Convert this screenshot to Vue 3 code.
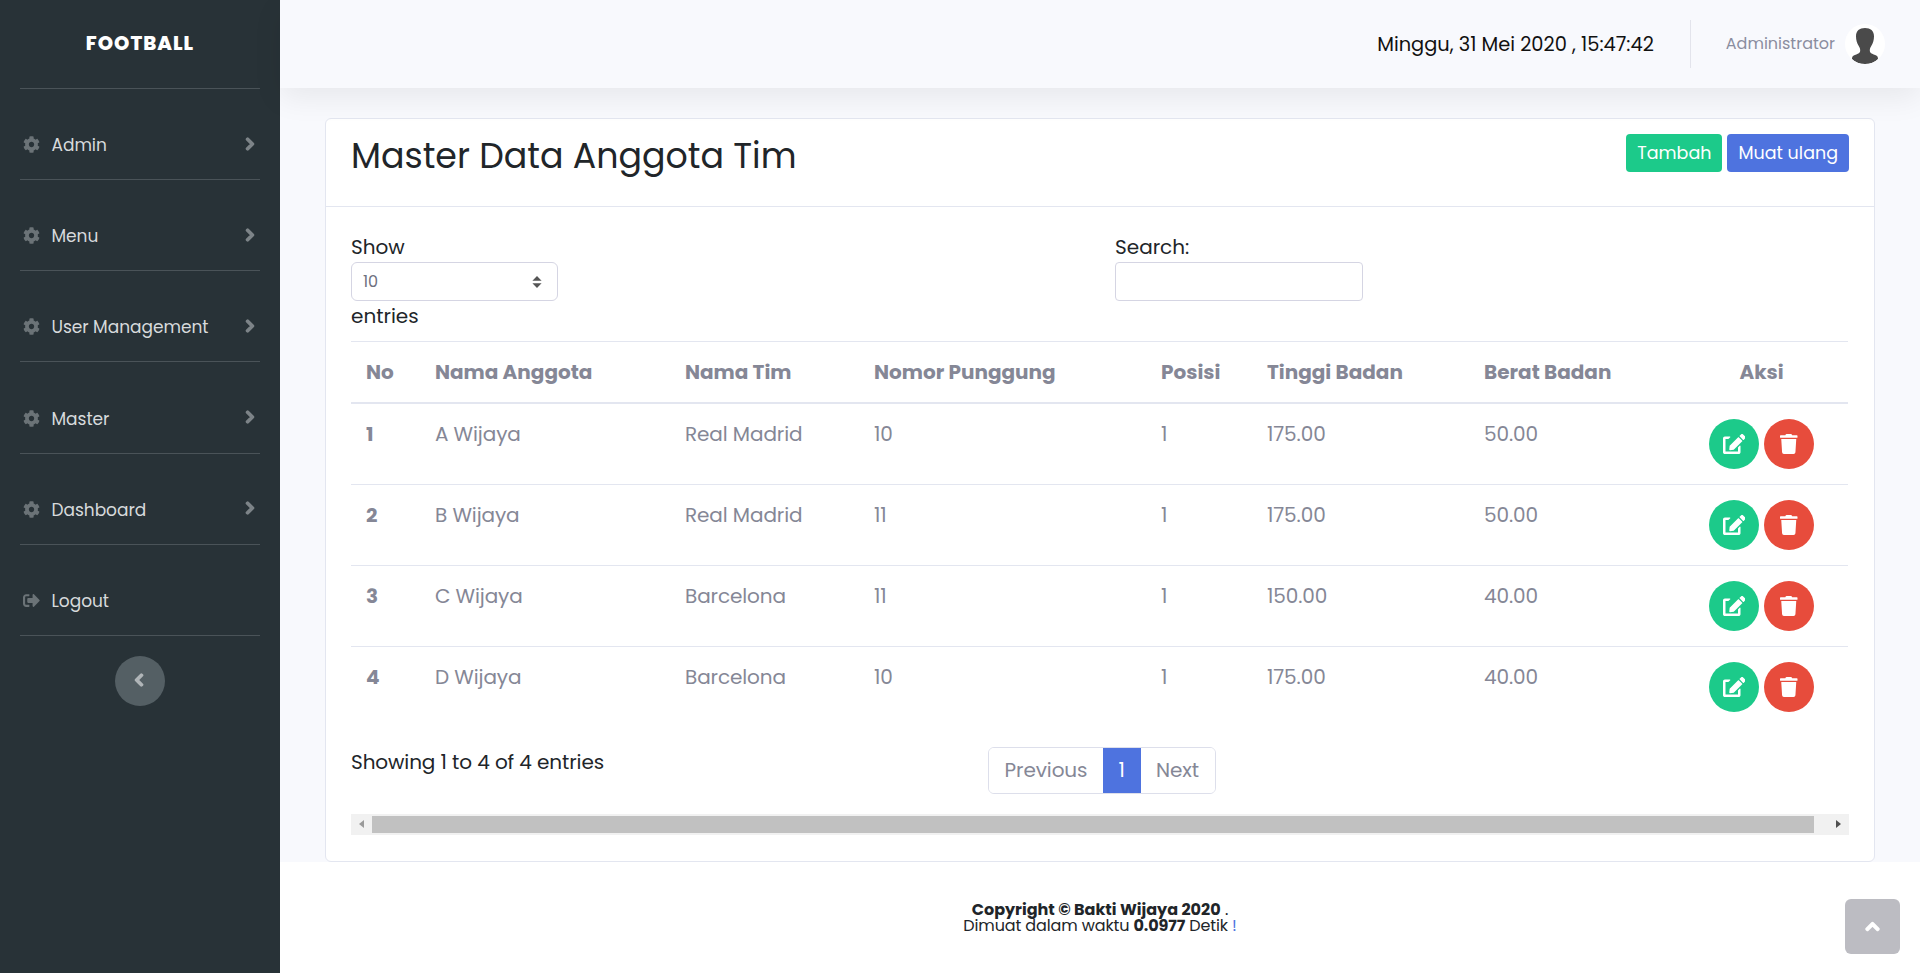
<script setup>
const menu = ['Admin', 'Menu', 'User Management', 'Master', 'Dashboard']
const rows = [
  { no: 1, nama: 'A Wijaya', tim: 'Real Madrid', nomor: 10, posisi: 1, tinggi: '175.00', berat: '50.00' },
  { no: 2, nama: 'B Wijaya', tim: 'Real Madrid', nomor: 11, posisi: 1, tinggi: '175.00', berat: '50.00' },
  { no: 3, nama: 'C Wijaya', tim: 'Barcelona', nomor: 11, posisi: 1, tinggi: '150.00', berat: '40.00' },
  { no: 4, nama: 'D Wijaya', tim: 'Barcelona', nomor: 10, posisi: 1, tinggi: '175.00', berat: '40.00' },
]
const cog = 'M487.4 315.7l-42.6-24.6c4.3-23.2 4.3-47 0-70.2l42.6-24.6c4.9-2.8 7.1-8.6 5.5-14-11.1-35.6-30-67.8-54.7-94.6-3.8-4.1-10-5.1-14.8-2.3L380.8 110c-17.9-15.4-38.5-27.3-60.8-35.1V25.8c0-5.6-3.9-10.5-9.4-11.7-36.7-8.2-74.3-7.8-109.2 0-5.5 1.2-9.4 6.1-9.4 11.7V75c-22.2 7.9-42.8 19.8-60.8 35.1L88.7 85.5c-4.9-2.8-11-1.9-14.8 2.3-24.7 26.7-43.6 58.9-54.7 94.6-1.7 5.4.6 11.2 5.5 14L67.3 221c-4.3 23.2-4.3 47 0 70.2l-42.6 24.6c-4.9 2.8-7.1 8.6-5.5 14 11.1 35.6 30 67.8 54.7 94.6 3.8 4.1 10 5.1 14.8 2.3l42.6-24.6c17.9 15.4 38.5 27.3 60.8 35.1v49.2c0 5.6 3.9 10.5 9.4 11.7 36.7 8.2 74.3 7.8 109.2 0 5.5-1.2 9.4-6.1 9.4-11.7v-49.2c22.2-7.9 42.8-19.8 60.8-35.1l42.6 24.6c4.9 2.8 11 1.9 14.8-2.3 24.7-26.7 43.6-58.9 54.7-94.6 1.5-5.5-.7-11.3-5.6-14.1zM256 336c-44.1 0-80-35.9-80-80s35.9-80 80-80 80 35.9 80 80-35.9 80-80 80z'
const chevRight = 'M285.476 272.971L91.132 467.314c-9.373 9.373-24.569 9.373-33.941 0l-22.667-22.667c-9.357-9.357-9.375-24.522-.04-33.901L188.505 256 34.484 101.255c-9.335-9.379-9.317-24.544.04-33.901l22.667-22.667c9.373-9.373 24.569-9.373 33.941 0L285.475 239.03c9.373 9.372 9.373 24.568.001 33.941z'
</script>

<template>
  <div class="app">
    <aside class="sidebar">
      <div class="brand">FOOTBALL</div>
      <a v-for="m in menu" :key="m" class="item">
        <svg class="ic" viewBox="0 0 512 512"><path :d="cog" /></svg>
        <span class="label">{{ m }}</span>
        <svg class="chev" viewBox="0 0 320 512"><path :d="chevRight" /></svg>
      </a>
      <a class="item">
        <svg class="ic" viewBox="0 0 512 512"><path d="M497 273L329 441c-15 15-41 4.5-41-17v-96H152c-13.3 0-24-10.7-24-24v-96c0-13.3 10.7-24 24-24h136V88c0-21.4 25.9-32 41-17l168 168c9.3 9.4 9.3 24.6 0 34zM192 436v-40c0-6.6-5.4-12-12-12H96c-17.7 0-32-14.3-32-32V160c0-17.7 14.3-32 32-32h84c6.6 0 12-5.4 12-12V76c0-6.6-5.4-12-12-12H96c-53 0-96 43-96 96v192c0 53 43 96 96 96h84c6.6 0 12-5.4 12-12z" /></svg>
        <span class="label">Logout</span>
      </a>
      <div class="collapse">
        <svg viewBox="0 0 320 512"><path d="M34.52 239.03L228.87 44.69c9.37-9.37 24.57-9.37 33.94 0l22.67 22.67c9.36 9.36 9.37 24.52.04 33.9L131.49 256l154.02 154.75c9.34 9.38 9.32 24.54-.04 33.9l-22.67 22.67c-9.37 9.37-24.57 9.37-33.94 0L34.52 272.97c-9.37-9.37-9.37-24.57 0-33.94z" /></svg>
      </div>
    </aside>

    <div class="main">
      <header class="topbar">
        <div class="clock">Minggu, 31 Mei 2020 , 15:47:42</div>
        <div class="sep"></div>
        <div class="who">Administrator</div>
        <div class="avatar">
          <svg viewBox="0 0 40 40"><path d="M20 4c-5.600 0-9 2.800-9 8.200 0 3.600 1 7 2.600 9.600 1 1.600 1.600 3 1.600 4.700 0 1.600-.8 2.500-2.400 3.200-2 .9-4 1.600-5 2.500-.6.6-.8 1.700-.8 2.800 2.800 3 7.400 5 13 5s10.200-2 13-5c0-1.100-.2-2.200-.8-2.800-1-.9-3-1.600-5-2.500-1.600-.7-2.400-1.600-2.400-3.200 0-1.700.6-3.100 1.600-4.700C28 19.200 29 15.800 29 12.200 29 6.800 25.600 4 20 4z" /></svg>
        </div>
      </header>

      <main class="content">
        <section class="card">
          <div class="card-head">
            <h1>Master Data Anggota Tim</h1>
            <div class="actions">
              <button class="btn green">Tambah</button>
              <button class="btn blue">Muat ulang</button>
            </div>
          </div>
          <div class="card-body">
            <div class="tools">
              <div class="len">
                <div>Show</div>
                <div class="select">
                  <span>10</span>
                  <svg viewBox="0 0 10 12"><path d="M5 0l4.600 4.800H.4zM5 12L.4 7.200h9.200z" /></svg>
                </div>
                <div>entries</div>
              </div>
              <div class="search">
                <div>Search:</div>
                <input type="search" aria-label="Search" />
              </div>
            </div>

            <table>
              <colgroup>
                <col class="c1" /><col class="c2" /><col class="c3" /><col class="c4" />
                <col class="c5" /><col class="c6" /><col class="c7" /><col class="c8" />
              </colgroup>
              <thead>
                <tr>
                  <th>No</th><th>Nama Anggota</th><th>Nama Tim</th><th>Nomor Punggung</th>
                  <th>Posisi</th><th>Tinggi Badan</th><th>Berat Badan</th><th class="mid">Aksi</th>
                </tr>
              </thead>
              <tbody>
                <tr v-for="r in rows" :key="r.no">
                  <td class="strong">{{ r.no }}</td>
                  <td>{{ r.nama }}</td>
                  <td>{{ r.tim }}</td>
                  <td>{{ r.nomor }}</td>
                  <td>{{ r.posisi }}</td>
                  <td>{{ r.tinggi }}</td>
                  <td>{{ r.berat }}</td>
                  <td class="mid ops">
                    <span class="round green">
                      <svg viewBox="0 0 576 512"><path d="M402.600 83.200l90.200 90.200c3.800 3.800 3.800 10 0 13.800L274.400 405.600l-92.800 10.300c-12.400 1.400-22.900-9.100-21.500-21.500l10.300-92.800L388.800 83.200c3.800-3.800 10-3.800 13.800 0zm162-22.900l-48.800-48.800c-15.200-15.200-39.900-15.200-55.200 0l-35.400 35.400c-3.800 3.800-3.800 10 0 13.800l90.200 90.200c3.800 3.800 10 3.800 13.800 0l35.400-35.400c15.200-15.300 15.200-40 0-55.200zM384 346.200V448H64V128h73.100c3.200 0 6.200-1.300 8.500-3.500l40-40c7.600-7.600 2.200-20.500-8.500-20.500H48C21.500 64 0 85.500 0 112v352c0 26.500 21.500 48 48 48h352c26.500 0 48-21.500 48-48V306.200c0-10.700-12.900-16-20.500-8.500l-40 40c-2.200 2.300-3.500 5.300-3.500 8.500z" /></svg>
                    </span>
                    <span class="round red">
                      <svg viewBox="0 0 448 512"><path d="M432 32H312l-9.400-18.700A24 24 0 0 0 281.100 0H166.800a23.720 23.720 0 0 0-21.400 13.300L136 32H16A16 16 0 0 0 0 48v32a16 16 0 0 0 16 16h416a16 16 0 0 0 16-16V48a16 16 0 0 0-16-16zM53.200 467a48 48 0 0 0 47.900 45h245.800a48 48 0 0 0 47.900-45L416 128H32z" /></svg>
                    </span>
                  </td>
                </tr>
              </tbody>
            </table>

            <div class="below">
              <div class="info">Showing 1 to 4 of 4 entries</div>
              <div class="pager">
                <span class="pg">Previous</span>
                <span class="pg on">1</span>
                <span class="pg">Next</span>
              </div>
            </div>

            <div class="hscroll">
              <span class="arrow left"></span>
              <div class="thumb"></div>
              <span class="arrow right"></span>
            </div>
          </div>
        </section>
      </main>

      <footer class="foot">
        <div class="copy"><b>Copyright © Bakti Wijaya 2020</b> .</div>
        <div class="load">Dimuat dalam waktu <b>0.0977</b> Detik <span class="bang">!</span></div>
      </footer>
    </div>

    <div class="totop">
      <svg viewBox="0 0 448 512"><path d="M240.971 130.524l194.343 194.343c9.373 9.373 9.373 24.569 0 33.941l-22.667 22.667c-9.357 9.357-24.522 9.375-33.901.04L224 227.495 69.255 381.516c-9.379 9.335-24.544 9.317-33.901-.04l-22.667-22.667c-9.373-9.373-9.373-24.569 0-33.941L207.030 130.525c9.372-9.373 24.568-9.373 33.941-.001z" /></svg>
    </div>
  </div>
</template>

<style>
html, body { margin: 0; background: #fff; }
</style>

<style scoped>
.app {
  display: flex;
  min-height: 973px;
  font-family: "Poppins", Inter, "Noto Sans", sans-serif;
  font-size: 20px;
  line-height: 30px;
  color: #212529;
}
.sidebar {
  width: 280px;
  flex: none;
  background: #283237;
  display: flex;
  flex-direction: column;
  padding: 0 20px;
  box-sizing: border-box;
}
.brand {
  height: 89px;
  display: flex;
  align-items: center;
  justify-content: center;
  color: #fff;
  font-weight: 800;
  font-size: 19.5px;
  letter-spacing: 1px;
  border-bottom: 1px solid #4a5358;
  box-sizing: border-box;
  padding-bottom: 1px;
}
.item {
  height: 91.17px;
  box-sizing: border-box;
  border-bottom: 1px solid #4a5358;
  display: flex;
  align-items: center;
  padding: 21px 6px 0 3px;
  color: #d7dadc;
  font-size: 17px;
  letter-spacing: -0.03px;
}
.ic { width: 17px; height: 17px; fill: #6b7377; flex: none; }
.label { margin-left: 11.5px; flex: 1; margin-top: 1px; }
.chev { width: 10px; height: 14px; fill: #7d8488; stroke: #7d8488; stroke-width: 55; stroke-linejoin: round; flex: none; margin: 0 -1px 2px 0; }
.collapse {
  width: 50px;
  height: 50px;
  border-radius: 50%;
  background: #545f64;
  margin: 20px auto 0;
  display: flex;
  align-items: center;
  justify-content: center;
}
.collapse svg { width: 10px; height: 14px; fill: #b0b5b8; stroke: #b0b5b8; stroke-width: 55; stroke-linejoin: round; margin-left: -2px; margin-top: -2px; }
.main { flex: 1; min-width: 0; display: flex; flex-direction: column; background: #f8f9fd; }
.topbar {
  height: 88px;
  flex: none;
  background: #f8f9fd;
  box-shadow: 0 10px 30px rgba(0, 0, 0, 0.07);
  display: flex;
  align-items: center;
  justify-content: flex-end;
  padding-right: 35px;
  position: relative;
}
.clock { font-size: 19.4px; color: #111; margin-top: 1px; }
.sep { width: 1px; height: 48px; background: #e3e4ec; margin: 0 35px 0 36px; }
.who { font-size: 16px; color: #8a8d9f; margin-right: 10px; }
.avatar { width: 40px; height: 40px; border-radius: 50%; background: #fff; overflow: hidden; }
.avatar svg { width: 40px; height: 40px; fill: #4a4a4a; display: block; }
.content { flex: 1; padding: 30px 45px 0; }
.card {
  background: #fff;
  border: 1px solid #e3e6f0;
  border-radius: 6px;
  box-sizing: border-box;
  height: 744px;
}
.card-head {
  height: 88px;
  box-sizing: border-box;
  border-bottom: 1px solid #e3e6f0;
  display: flex;
  align-items: flex-start;
  justify-content: space-between;
  padding: 15px 25px 0;
}
h1 { margin: 1px 0 0; font-size: 34.8px; line-height: 42px; font-weight: 400; color: #212529; }
.actions { display: flex; gap: 5px; }
.btn {
  height: 38px;
  border: 0;
  border-radius: 4px;
  padding: 0 11px;
  font: inherit;
  font-size: 17.5px;
  line-height: 38px;
  color: #fff;
}
.green { background: #1cca8a; }
.blue { background: #4e73df; }
.red { background: #e74c3c; }
.card-body { padding: 25px 25px 0; }
.tools { display: flex; height: 109px; }
.len { width: 764px; }
.select {
  width: 207px;
  height: 39px;
  box-sizing: border-box;
  border: 1px solid #d5d5e3;
  border-radius: 6px;
  display: flex;
  align-items: center;
  justify-content: space-between;
  padding: 0 15px 0 11px;
  font-size: 16px;
  color: #6e707e;
}
.select svg { width: 10px; height: 12px; fill: #555; }
.search input {
  display: block;
  width: 248px;
  height: 39px;
  box-sizing: border-box;
  border: 1px solid #d5d5e3;
  border-radius: 4px;
  background: #fff;
}
table { width: 1497px; border-collapse: collapse; table-layout: fixed; border-top: 1px solid #e3e6f0; }
.c1 { width: 69px; }
.c2 { width: 250px; }
.c3 { width: 189px; }
.c4 { width: 287px; }
.c5 { width: 106px; }
.c6 { width: 217px; }
.c7 { width: 206px; }
.c8 { width: 173px; }
th, td { padding: 15px; text-align: left; vertical-align: top; white-space: nowrap; color: #858796; }
th { font-weight: 700; height: 61px; box-sizing: border-box; border-bottom: 2px solid #e3e6f0; padding-bottom: 14px; }
td { border-bottom: 1px solid #e3e6f0; height: 81px; box-sizing: border-box; font-weight: 400; letter-spacing: -0.1px; }
tbody tr:last-child td { border-bottom: 0; }
.mid { text-align: center; }
.strong { font-weight: 700; }
.ops { font-size: 0; line-height: 0; }
.round {
  display: inline-flex;
  width: 50px;
  height: 50px;
  border-radius: 50%;
  align-items: center;
  justify-content: center;
}
.round + .round { margin-left: 5px; }
.round svg { height: 20px; fill: #fff; }
.below { display: flex; margin-top: 20px; height: 67px; }
.info { width: 637px; letter-spacing: -0.1px; }
.pager { display: flex; height: 47px; box-sizing: border-box; border: 1px solid #dddfeb; border-radius: 6px; overflow: hidden; letter-spacing: -0.1px; }
.pg { padding: 0 15.6px; line-height: 45px; color: #858796; background: #fff; }
.pg.on { background: #4e73df; color: #fff; }
.hscroll {
  display: flex;
  align-items: center;
  height: 21px;
  background: #f1f1f1;
  position: relative;
}
.thumb { position: absolute; left: 21px; right: 35px; top: 2px; bottom: 2px; background: #c1c1c1; }
.arrow { width: 0; height: 0; position: absolute; top: 6px; border-top: 4.5px solid transparent; border-bottom: 4.5px solid transparent; }
.arrow.left { left: 8px; border-right: 5px solid #9a9a9a; }
.arrow.right { right: 8px; border-left: 5px solid #505050; }
.foot {
  height: 111px;
  flex: none;
  background: #fff;
  box-sizing: border-box;
  padding-top: 40px;
  text-align: center;
  font-size: 16px;
  line-height: 16px;
  color: #212529;
}
.foot b { font-weight: 700; }
.load { letter-spacing: -0.12px; }
.bang { color: #4e73df; }
.totop {
  position: fixed;
  right: 20px;
  bottom: 19px;
  width: 55px;
  height: 55px;
  border-radius: 6px;
  background: #bcbcc2;
  display: flex;
  align-items: center;
  justify-content: center;
}
.totop svg { width: 15px; height: 15px; fill: #fff; stroke: #fff; stroke-width: 60; stroke-linejoin: round; }
</style>
